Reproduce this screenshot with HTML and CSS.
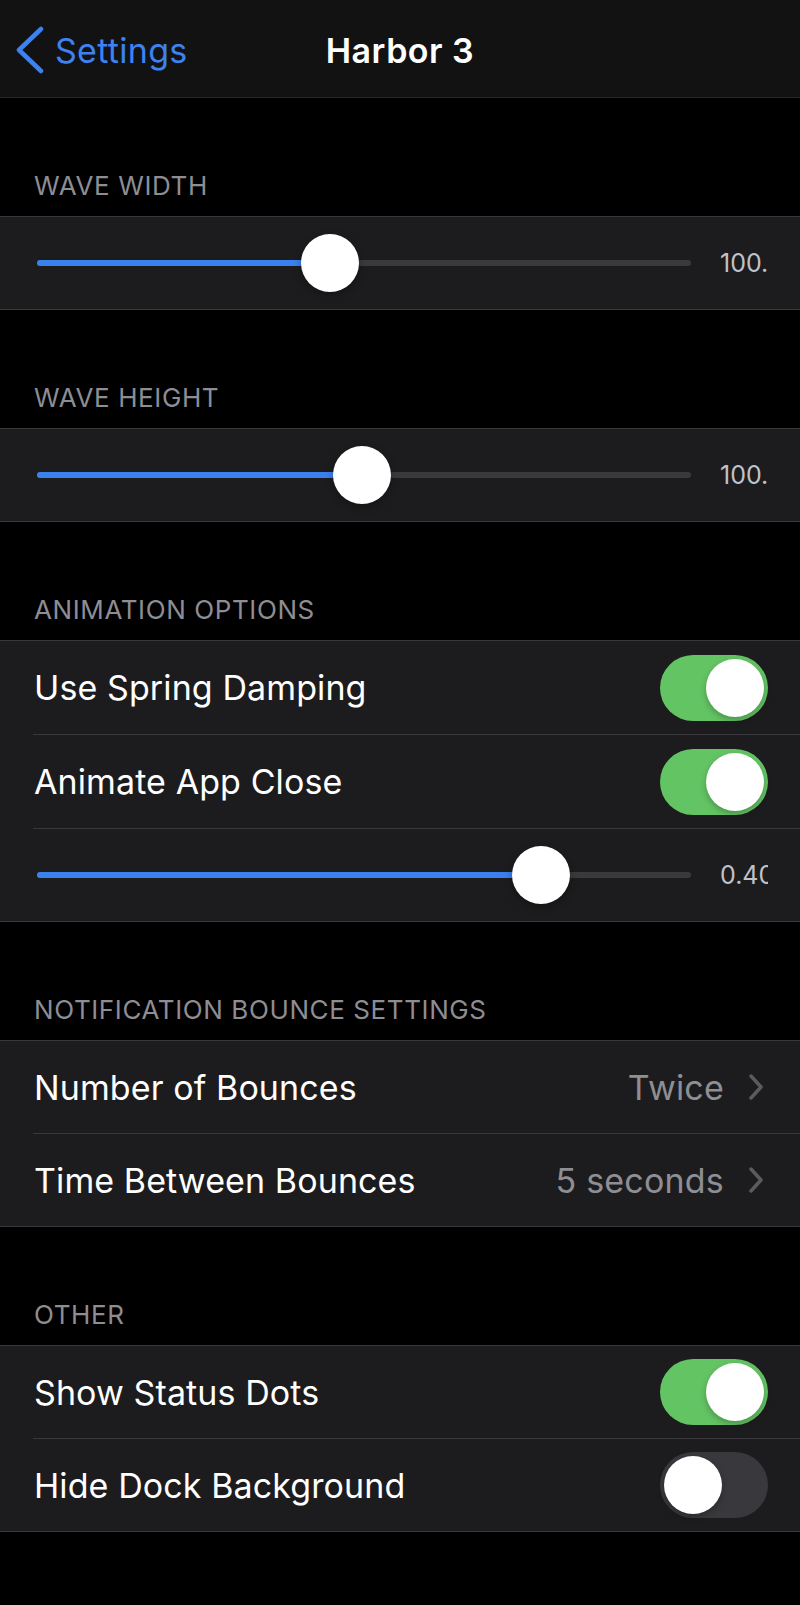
FILE: index.html
```html
<!DOCTYPE html>
<html lang="en">
<head>
  <meta charset="UTF-8">
  <title>Harbor 3</title>
  <link rel="stylesheet" href="styles.css">
</head>
<body>

  <nav class="navbar">
    <a href="#" class="back">
      <svg class="back-icon" width="30" height="48" viewBox="0 0 30 48">
        <path d="M25 3 L3 24 L25 45" fill="none" stroke="#3d82f0" stroke-width="4.5" stroke-linecap="round" stroke-linejoin="round"/>
      </svg>
      <span>Settings</span>
    </a>
    <h1 class="title">Harbor 3</h1>
    <span></span>
  </nav>

  <div class="section-header">Wave Width</div>
  <div class="group">
    <div class="row slider-row">
      <div class="track">
        <div class="fill" style="width: 44.8%"></div>
        <div class="thumb" style="left: 44.8%"></div>
      </div>
      <div class="value">100.</div>
    </div>
  </div>

  <div class="section-header">Wave Height</div>
  <div class="group">
    <div class="row slider-row">
      <div class="track">
        <div class="fill" style="width: 49.7%"></div>
        <div class="thumb" style="left: 49.7%"></div>
      </div>
      <div class="value">100.</div>
    </div>
  </div>

  <div class="section-header">Animation Options</div>
  <div class="group">
    <div class="row tall">
      <span class="label">Use Spring Damping</span>
      <span class="switch on"><span class="knob"></span></span>
    </div>
    <div class="row tall">
      <span class="label">Animate App Close</span>
      <span class="switch on"><span class="knob"></span></span>
    </div>
    <div class="row slider-row">
      <div class="track">
        <div class="fill" style="width: 77%"></div>
        <div class="thumb" style="left: 77%"></div>
      </div>
      <div class="value">0.40</div>
    </div>
  </div>

  <div class="section-header">Notification Bounce Settings</div>
  <div class="group">
    <div class="row link">
      <span class="label">Number of Bounces</span>
      <span class="detail">Twice</span>
      <svg class="chevron" width="16" height="26" viewBox="0 0 16 26">
        <path d="M3 2 L13 13 L3 24" fill="none" stroke="#5a5a5f" stroke-width="3.5" stroke-linecap="round" stroke-linejoin="round"/>
      </svg>
    </div>
    <div class="row link">
      <span class="label">Time Between Bounces</span>
      <span class="detail">5 seconds</span>
      <svg class="chevron" width="16" height="26" viewBox="0 0 16 26">
        <path d="M3 2 L13 13 L3 24" fill="none" stroke="#5a5a5f" stroke-width="3.5" stroke-linecap="round" stroke-linejoin="round"/>
      </svg>
    </div>
  </div>

  <div class="section-header">Other</div>
  <div class="group">
    <div class="row">
      <span class="label">Show Status Dots</span>
      <span class="switch on"><span class="knob"></span></span>
    </div>
    <div class="row">
      <span class="label">Hide Dock Background</span>
      <span class="switch"><span class="knob"></span></span>
    </div>
  </div>

</body>
</html>
```

FILE: styles.css
```css
body {
  margin: 0;
  font-family: Inter, "Noto Sans", sans-serif;
  background-color: #000;
  color: #fff;
}

.navbar {
  height: 98px;
  box-sizing: border-box;
  background-color: #121212;
  border-bottom: 1px solid #262628;
  display: grid;
  grid-template-columns: 1fr auto 1fr;
  align-items: center;
  padding-top: 3px;
}

.back {
  display: flex;
  align-items: center;
  color: #3d82f0;
  text-decoration: none;
  font-size: 34px;
  letter-spacing: 0.3px;
  padding-left: 16px;
}

.back-icon {
  margin-right: 9px;
}

.title {
  margin: 0;
  font-size: 34px;
  font-weight: 600;
  letter-spacing: 0.5px;
}

.section-header {
  height: 118px;
  box-sizing: border-box;
  display: flex;
  align-items: flex-end;
  padding: 0 0 15px 34px;
  font-size: 26px;
  line-height: 30px;
  letter-spacing: 0.6px;
  text-transform: uppercase;
  color: #8d8d93;
}

.group {
  background-color: #1c1c1e;
  border-top: 1px solid #38383a;
  border-bottom: 1px solid #38383a;
}

.row {
  height: 92px;
  display: flex;
  align-items: center;
  padding: 0 32px 0 34px;
  position: relative;
}

.row.tall {
  height: 93px;
}

.row + .row::before {
  content: "";
  position: absolute;
  top: -1px;
  left: 33px;
  right: 0;
  height: 1px;
  background-color: #38383a;
}

.row + .row {
  margin-top: 1px;
}

.label {
  flex: 1;
  font-size: 34px;
  letter-spacing: 0.1px;
}

.detail {
  font-size: 34px;
  color: #8e8e93;
  margin-right: 24px;
  letter-spacing: 0.2px;
}

.link {
  padding-right: 36px;
}

/* sliders */
.slider-row {
  padding-left: 37px;
}

.track {
  flex: 1;
  height: 6px;
  border-radius: 3px;
  background-color: #3a3a3c;
  position: relative;
}

.fill {
  height: 100%;
  border-radius: 3px;
  background-color: #3b80ef;
}

.thumb {
  position: absolute;
  top: 50%;
  width: 58px;
  height: 58px;
  margin: -29px 0 0 -29px;
  border-radius: 50%;
  background-color: #fff;
  box-shadow: 0 3px 8px rgba(0, 0, 0, 0.3);
}

.value {
  width: 48px;
  margin-left: 29px;
  overflow: hidden;
  white-space: nowrap;
  font-size: 25px;
  color: #c2c2c6;
}

/* switches */
.switch {
  width: 108px;
  height: 66px;
  border-radius: 33px;
  background-color: #39393d;
  display: flex;
  align-items: center;
  padding: 0 4px;
  box-sizing: border-box;
}

.switch.on {
  background-color: #63c463;
  justify-content: flex-end;
}

.knob {
  width: 58px;
  height: 58px;
  border-radius: 50%;
  background-color: #fff;
  box-shadow: 0 3px 6px rgba(0, 0, 0, 0.25);
}
```
